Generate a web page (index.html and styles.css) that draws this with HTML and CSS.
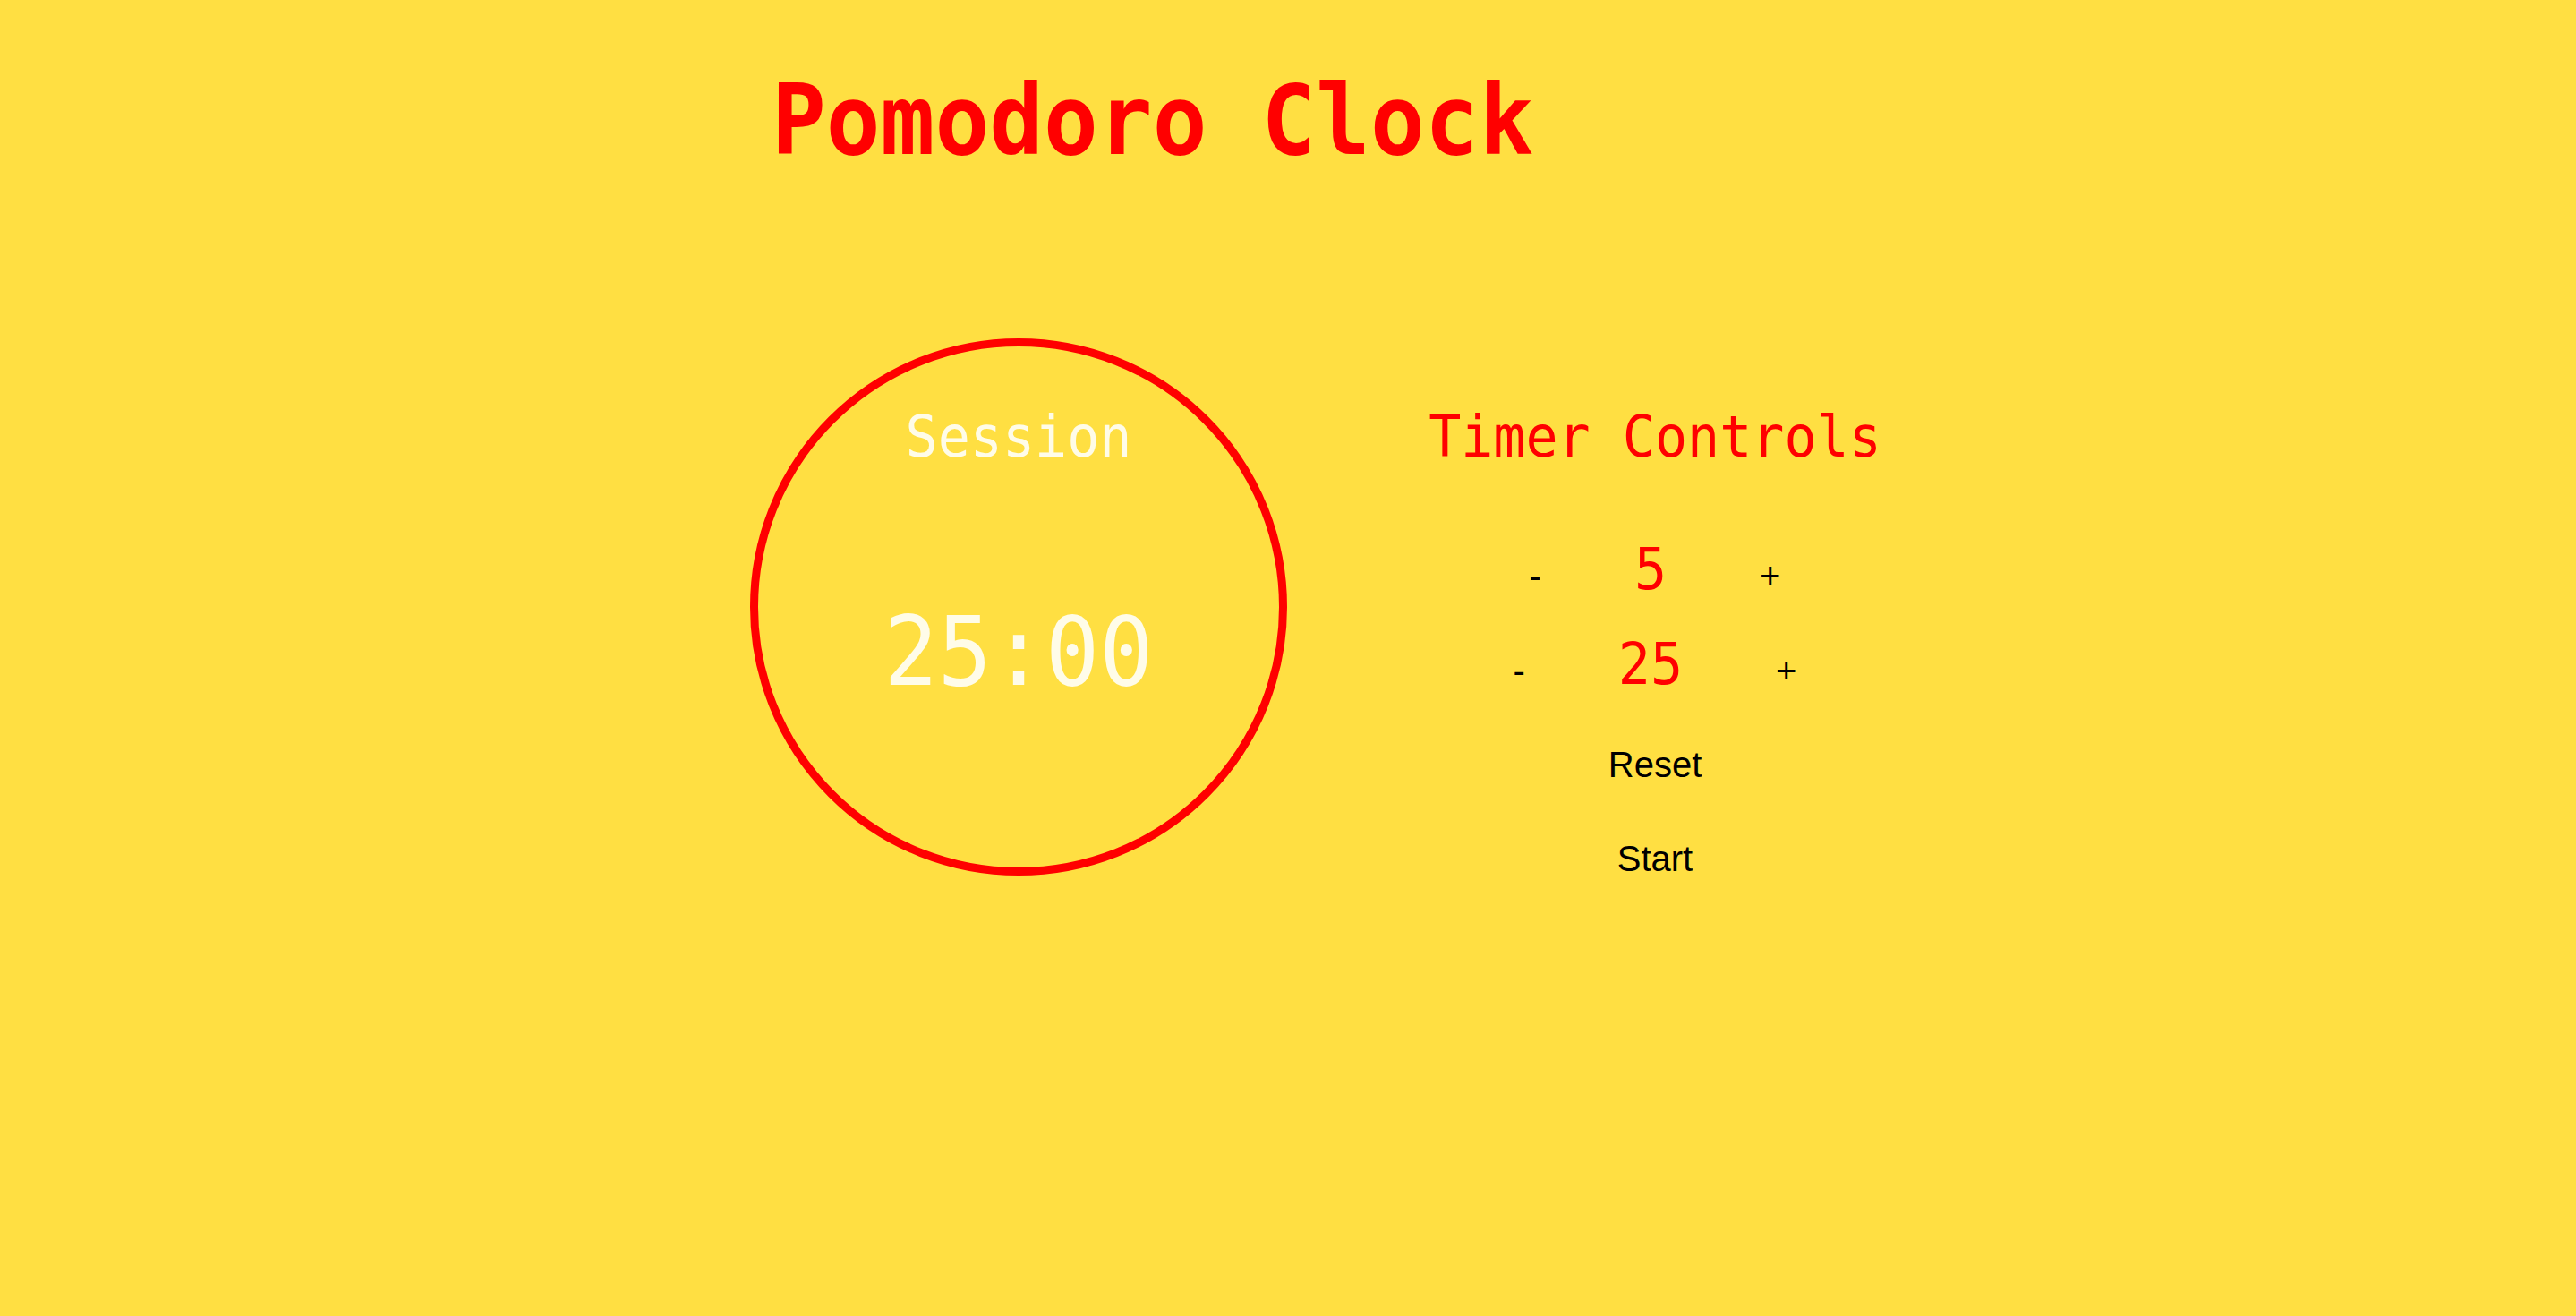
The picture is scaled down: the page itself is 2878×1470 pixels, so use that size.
FILE: index.html
```html
<!DOCTYPE html>
<html lang="en">
<head>
<meta charset="utf-8">
<title>Pomodoro Clock</title>
<link rel="stylesheet" href="styles.css">
</head>
<body>
  <h1 class="title"><span class="tall">Pomodoro Clock</span></h1>
  <main class="main">
    <div class="clock">
      <div class="clock-label"><span class="tall">Session</span></div>
      <div class="clock-time"><span class="tall">25:00</span></div>
    </div>
    <section class="controls">
      <h2 class="controls-title"><span class="tall">Timer Controls</span></h2>
      <div class="row row-break">
        <button class="btn btn-sign">-</button>
        <span class="value tall">5</span>
        <button class="btn btn-sign">+</button>
      </div>
      <div class="row row-session">
        <button class="btn btn-sign">-</button>
        <span class="value tall">25</span>
        <button class="btn btn-sign">+</button>
      </div>
      <button class="btn btn-reset">Reset</button>
      <button class="btn btn-start">Start</button>
    </section>
  </main>
</body>
</html>
```

FILE: styles.css
```css
html, body {
  margin: 0;
  padding: 0;
}

body {
  background: #ffdf42;
  min-height: 100vh;
  font-family: "DejaVu Sans Mono", monospace;
  font-variant-numeric: slashed-zero;
}

.tall {
  display: inline-block;
  transform: scaleY(1.07);
  transform-origin: 50% 50%;
}

.title {
  margin: 0;
  padding: 85px 0 0 862px;
  font-family: "DejaVu Sans Mono", monospace;
  font-weight: bold;
  font-size: 101px;
  line-height: 1;
  color: #ff0000;
}

.main {
  display: flex;
  align-items: flex-start;
  margin-top: 192px;
  padding-left: 838px;
}

.clock {
  box-sizing: border-box;
  width: 600px;
  height: 600px;
  border: 9px solid #ff0000;
  border-radius: 50%;
  display: flex;
  flex-direction: column;
  align-items: center;
  padding-top: 71px;
  color: #fffce8;
}

.clock-label {
  font-size: 60px;
  line-height: 1;
}

.clock-time {
  margin-top: 161px;
  font-size: 100px;
  line-height: 1;
}

.controls {
  width: 600px;
  margin-left: 111px;
  padding-top: 80px;
  display: flex;
  flex-direction: column;
  align-items: center;
}

.controls-title {
  margin: 0;
  font-weight: normal;
  font-size: 60px;
  line-height: 1;
  color: #ff0000;
}

.row {
  display: flex;
  align-items: baseline;
  gap: 104px;
}

.row-break {
  margin-top: 88px;
}

.row-session {
  margin-top: 46px;
}

.value {
  font-family: "DejaVu Sans Mono", monospace;
  font-size: 60px;
  line-height: 1;
  color: #ff0000;
}

.btn {
  margin: 0;
  padding: 0;
  border: 0;
  background: none;
  font-family: "Liberation Sans", Arial, sans-serif;
  font-size: 40px;
  line-height: 1;
  color: #000;
  cursor: pointer;
}

.btn-reset {
  margin-top: 62px;
}

.btn-start {
  margin-top: 65px;
}
```
